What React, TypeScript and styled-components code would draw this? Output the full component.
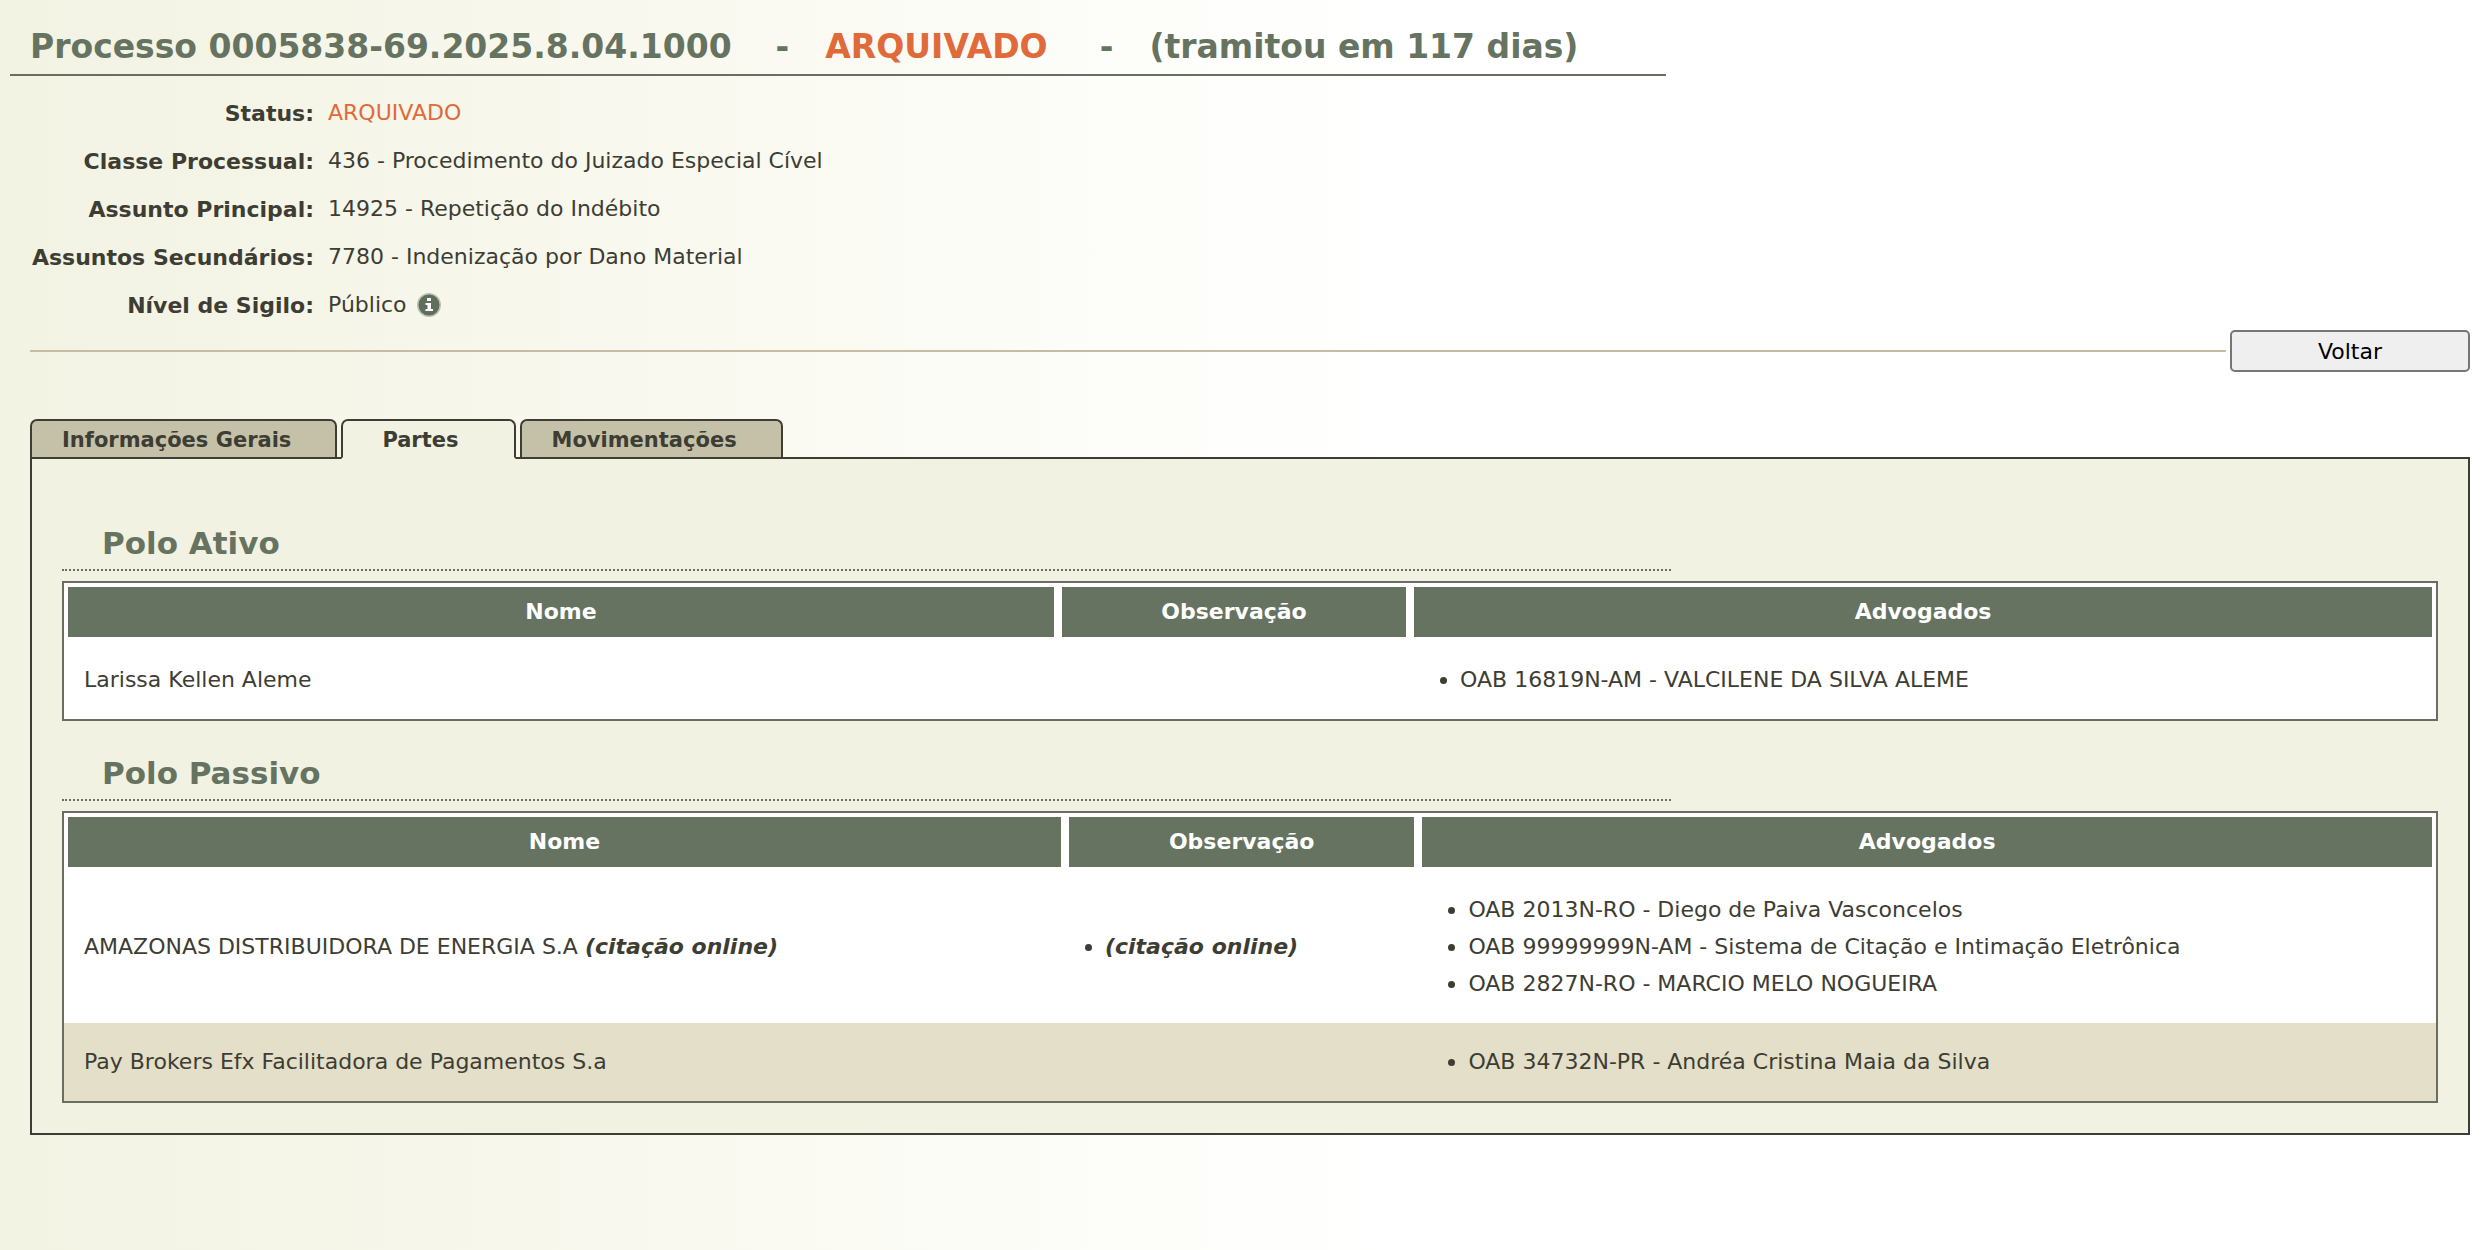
import React from "react";
import styled, { createGlobalStyle, css } from "styled-components";

const color = {
  ink: "#3d3d33",
  green: "#667360",
  orange: "#e06a3a",
  rule: "#6b6d63",
  tan: "#c5bda3",
  tab: "#c5c1a9",
  panel: "#f1f2e2",
  stripe: "#e4dfc8",
};

const GlobalStyle = createGlobalStyle`
  * { box-sizing: border-box; }
  body {
    margin: 0;
    min-height: 100vh;
    background: linear-gradient(to right, #f2f3e3 0, #f5f5e8 300px, #f9f9f0 700px, #fcfcf7 1000px, #fff 1400px);
    color: ${color.ink};
    font-family: Verdana, "DejaVu Sans", sans-serif;
    font-size: 22px;
    line-height: 28px;
  }
`;

const Page = styled.main`
  padding: 26px 22px 40px 10px;
`;

const Title = styled.h1`
  width: 67.3%;
  margin: 0;
  padding: 0 20px 6px;
  border-bottom: 2px solid ${color.rule};
  color: ${color.green};
  font-size: 33px;
  line-height: 42px;
  white-space: nowrap;
`;

const TitlePart = styled.span<{ $gap: number; $alert?: boolean }>`
  margin-left: ${(p) => p.$gap}px;
  ${(p) => p.$alert && css`color: ${color.orange};`}
`;

const Body = styled.div`
  padding-left: 20px;
`;

const Details = styled.dl`
  display: grid;
  grid-template-columns: 284px 1fr;
  column-gap: 14px;
  row-gap: 20px;
  margin: 0;
  padding-top: 23px;
`;

const Label = styled.dt`
  padding-top: 1px;
  line-height: 27px;
  font-weight: bold;
  text-align: right;
  white-space: nowrap;
`;

const Value = styled.dd<{ $alert?: boolean }>`
  display: flex;
  align-items: center;
  gap: 10px;
  margin: 0;
  ${(p) => p.$alert && css`color: ${color.orange};`}
`;

const InfoIcon = styled.svg`
  width: 24px;
  height: 24px;
`;

const Actions = styled.div`
  display: flex;
  align-items: center;
  gap: 4px;
  padding-top: 11px;
`;

const Rule = styled.hr`
  flex: 1;
  height: 2px;
  margin: 0;
  border: 0;
  background: ${color.tan};
`;

const BackButton = styled.button`
  width: 240px;
  height: 42px;
  padding: 2px 0 0;
  border: 2px solid #767676;
  border-radius: 5px;
  background: #efefef;
  color: #000;
  font: inherit;
`;

const Tabs = styled.div`
  display: flex;
  gap: 4px;
  margin-top: 47px;
`;

const Tab = styled.button<{ $active?: boolean }>`
  position: relative;
  height: 40px;
  margin-bottom: -2px;
  padding: ${(p) => (p.$active ? "2px 55px 0 39px" : "2px 44px 0 30px")};
  border: 2px solid ${color.ink};
  border-bottom-color: ${(p) => (p.$active ? color.panel : color.ink)};
  border-radius: 7px 7px 0 0;
  background: ${(p) => (p.$active ? color.panel : color.tab)};
  color: ${color.ink};
  font: bold 21px/34px Verdana, "DejaVu Sans", sans-serif;
`;

const Panel = styled.section`
  padding: 59px 30px 30px;
  border: 2px solid ${color.ink};
  background: ${color.panel};
`;

const PartyGroup = styled.section`
  & + & {
    margin-top: 27px;
  }
`;

const GroupTitle = styled.h2`
  width: 67.7%;
  margin: 0 0 10px;
  padding: 4px 40px 5px;
  border-bottom: 2px dotted ${color.rule};
  color: ${color.green};
  font-size: 31px;
  line-height: 42px;
`;

const PartyTable = styled.table`
  width: 100%;
  border: 2px solid ${color.rule};
  border-spacing: 0;
  table-layout: fixed;
  background: #fff;
`;

const HeadCell = styled.th<{ $width?: string }>`
  width: ${(p) => p.$width ?? "auto"};
  height: 58px;
  padding: 0;
  border: 4px solid #fff;
  background: ${color.green};
  background-clip: padding-box;
  color: #fff;
`;

const Row = styled.tr`
  &:nth-child(even) {
    background: ${color.stripe};
  }
`;

const Cell = styled.td`
  padding: 20px 20px 21px;
  line-height: 37px;
`;

const ItemList = styled.ul<{ $indent: number }>`
  margin: 0;
  padding-left: ${(p) => p.$indent}px;
`;

const Online = styled.em`
  font-weight: bold;
`;

type Party = { name: string; online?: boolean; lawyers: string[] };

const citation = "(citação online)";

function Parties(props: { title: string; widths: [string, string]; parties: Party[] }) {
  return (
    <PartyGroup>
      <GroupTitle>{props.title}</GroupTitle>
      <PartyTable>
        <thead>
          <tr>
            <HeadCell scope="col" $width={props.widths[0]}>Nome</HeadCell>
            <HeadCell scope="col" $width={props.widths[1]}>Observação</HeadCell>
            <HeadCell scope="col">Advogados</HeadCell>
          </tr>
        </thead>
        <tbody>
          {props.parties.map((party) => (
            <Row key={party.name}>
              <Cell>
                {party.name} {party.online && <Online>{citation}</Online>}
              </Cell>
              <Cell>
                {party.online && (
                  <ItemList $indent={20}>
                    <li><Online>{citation}</Online></li>
                  </ItemList>
                )}
              </Cell>
              <Cell>
                <ItemList $indent={30}>
                  {party.lawyers.map((lawyer) => (
                    <li key={lawyer}>{lawyer}</li>
                  ))}
                </ItemList>
              </Cell>
            </Row>
          ))}
        </tbody>
      </PartyTable>
    </PartyGroup>
  );
}

export default function App() {
  return (
    <>
      <GlobalStyle />
      <Page>
        <Title>
          Processo 0005838-69.2025.8.04.1000
          <TitlePart $gap={44}>-</TitlePart>
          <TitlePart $gap={36} $alert>ARQUIVADO</TitlePart>
          <TitlePart $gap={52}>-</TitlePart>
          <TitlePart $gap={36}>(tramitou em 117 dias)</TitlePart>
        </Title>
        <Body>
          <Details>
            <Label>Status:</Label>
            <Value $alert>ARQUIVADO</Value>
            <Label>Classe Processual:</Label>
            <Value>436 - Procedimento do Juizado Especial Cível</Value>
            <Label>Assunto Principal:</Label>
            <Value>14925 - Repetição do Indébito</Value>
            <Label>Assuntos Secundários:</Label>
            <Value>7780 - Indenização por Dano Material</Value>
            <Label>Nível de Sigilo:</Label>
            <Value>
              Público
              <InfoIcon viewBox="0 0 24 24" aria-hidden="true">
                <circle cx="12" cy="12" r="12" fill="#b9c1b0" />
                <circle cx="12" cy="12" r="10.500" fill="#5f6f5b" />
                <path d="M10 5h4v3h-4zM8.500 10h5.500v6h2v2h-7.500v-2h2v-4h-2z" fill="#fff" />
              </InfoIcon>
            </Value>
          </Details>
          <Actions>
            <Rule />
            <BackButton type="button">Voltar</BackButton>
          </Actions>
          <Tabs role="tablist">
            <Tab type="button" role="tab">Informações Gerais</Tab>
            <Tab type="button" role="tab" aria-selected="true" $active>Partes</Tab>
            <Tab type="button" role="tab">Movimentações</Tab>
          </Tabs>
          <Panel role="tabpanel">
            <Parties
              title="Polo Ativo"
              widths={["41.9%", "14.85%"]}
              parties={[
                { name: "Larissa Kellen Aleme", lawyers: ["OAB 16819N-AM - VALCILENE DA SILVA ALEME"] },
              ]}
            />
            <Parties
              title="Polo Passivo"
              widths={["42.2%", "14.9%"]}
              parties={[
                {
                  name: "AMAZONAS DISTRIBUIDORA DE ENERGIA S.A",
                  online: true,
                  lawyers: [
                    "OAB 2013N-RO - Diego de Paiva Vasconcelos",
                    "OAB 99999999N-AM - Sistema de Citação e Intimação Eletrônica",
                    "OAB 2827N-RO - MARCIO MELO NOGUEIRA",
                  ],
                },
                {
                  name: "Pay Brokers Efx Facilitadora de Pagamentos S.a",
                  lawyers: ["OAB 34732N-PR - Andréa Cristina Maia da Silva"],
                },
              ]}
            />
          </Panel>
        </Body>
      </Page>
    </>
  );
}
